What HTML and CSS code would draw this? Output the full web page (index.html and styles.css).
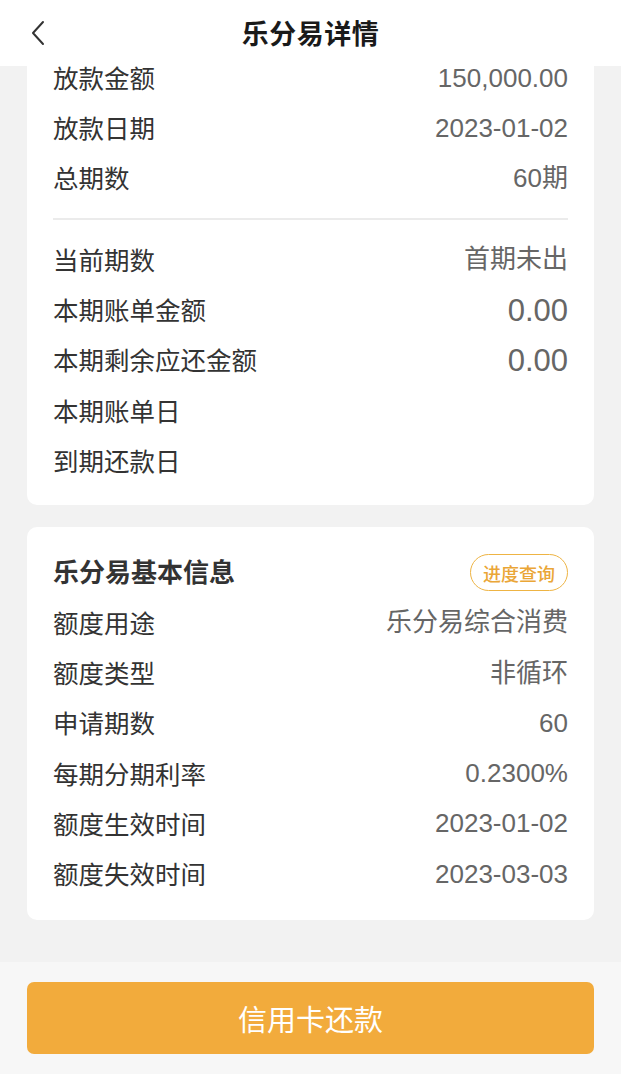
FILE: index.html
```html
<!DOCTYPE html>
<html lang="zh-CN">
<head>
<meta charset="utf-8">
<title>乐分易详情</title>
<link rel="stylesheet" href="styles.css">
</head>
<body>
<div class="page">
  <header class="nav">
    <span class="back">
      <svg width="16" height="26" viewBox="0 0 16 26"><path d="M13 2 L3 13 L13 24" fill="none" stroke="#333" stroke-width="2" stroke-linecap="round" stroke-linejoin="round"/></svg>
    </span>
    <h1 class="title">乐分易详情</h1>
  </header>
  <main class="content">
    <section class="card card-top">
      <div class="row row-first"><span class="label">放款金额</span><span class="value">150,000.00</span></div>
      <div class="row"><span class="label">放款日期</span><span class="value">2023-01-02</span></div>
      <div class="row"><span class="label">总期数</span><span class="value">60期</span></div>
      <div class="divider"></div>
      <div class="row"><span class="label">当前期数</span><span class="value">首期未出</span></div>
      <div class="row"><span class="label">本期账单金额</span><span class="value big">0.00</span></div>
      <div class="row"><span class="label">本期剩余应还金额</span><span class="value big">0.00</span></div>
      <div class="row"><span class="label">本期账单日</span><span class="value"></span></div>
      <div class="row"><span class="label">到期还款日</span><span class="value"></span></div>
    </section>
    <section class="card card-info">
      <div class="card-head">
        <h2 class="card-title">乐分易基本信息</h2>
        <span class="badge">进度查询</span>
      </div>
      <div class="row"><span class="label">额度用途</span><span class="value">乐分易综合消费</span></div>
      <div class="row"><span class="label">额度类型</span><span class="value">非循环</span></div>
      <div class="row"><span class="label">申请期数</span><span class="value">60</span></div>
      <div class="row"><span class="label">每期分期利率</span><span class="value">0.2300%</span></div>
      <div class="row"><span class="label">额度生效时间</span><span class="value">2023-01-02</span></div>
      <div class="row"><span class="label">额度失效时间</span><span class="value">2023-03-03</span></div>
    </section>
  </main>
  <footer class="footer">
    <button class="pay-btn">信用卡还款</button>
  </footer>
</div>
</body>
</html>
```

FILE: styles.css
```css
* { box-sizing: border-box; }
html, body {
  margin: 0;
  padding: 0;
  width: 621px;
  height: 1074px;
  overflow: hidden;
  background: #f2f2f2;
  font-family: "Noto Sans CJK SC", "Noto Sans", sans-serif;
}
.page {
  display: flex;
  flex-direction: column;
  height: 1074px;
}
.nav {
  height: 66px;
  flex: none;
  background: #fff;
  display: flex;
  align-items: center;
  justify-content: center;
  position: relative;
}
.back {
  position: absolute;
  left: 30px;
  top: 20px;
  width: 16px;
  height: 26px;
  display: block;
}
.back svg { display: block; }
.title {
  margin: 0;
  font-size: 27px;
  line-height: 1;
  font-weight: 700;
  color: #1a1a1a;
  letter-spacing: 0.5px;
  padding-bottom: 2px;
}
.content {
  flex: 1;
  padding: 0 27px;
  display: flex;
  flex-direction: column;
  gap: 22px;
}
.card {
  background: #fff;
  border-radius: 10px;
  padding: 0 26px;
}
.card-top {
  border-radius: 0 0 10px 10px;
  padding-bottom: 17.5px;
}
.card-info {
  padding-top: 19px;
  padding-bottom: 19px;
}
.row {
  height: 50.3px;
  display: flex;
  align-items: center;
  justify-content: space-between;
  line-height: 1;
}
.row-first {
  height: 38.5px;
  align-items: flex-start;
}
.label {
  font-size: 25.5px;
  line-height: 25px;
  color: #333;
  padding-bottom: 6px;
}
.row-first .label {
  line-height: 21px;
}
.value {
  font-family: "Liberation Sans", "Noto Sans CJK SC", sans-serif;
  font-size: 26px;
  line-height: 25px;
  color: #666;
  padding-bottom: 3px;
}
.value.big {
  font-size: 31px;
}
.divider {
  height: 2px;
  flex: none;
  background: #ebebeb;
  margin: 13px 0 16px;
}
.card-head {
  height: 53px;
  display: flex;
  align-items: center;
  justify-content: space-between;
}
.card-title {
  margin: 0;
  font-size: 26px;
  line-height: 1;
  font-weight: 700;
  color: #333;
  padding-bottom: 4px;
}
.badge {
  width: 98px;
  height: 37px;
  border: 1.5px solid #eeb444;
  border-radius: 19px;
  color: #eaa637;
  font-size: 18px;
  font-weight: 500;
  line-height: 1;
  display: flex;
  align-items: center;
  justify-content: center;
}
.footer {
  flex: none;
  height: 112px;
  background: #f7f7f7;
  padding: 20px 27px 0;
}
.pay-btn {
  width: 100%;
  height: 72px;
  border: none;
  border-radius: 7px;
  background: #f2ab3c;
  color: #fff;
  font-family: "Noto Sans CJK SC", "Noto Sans", sans-serif;
  font-size: 29px;
  line-height: 1;
  display: flex;
  align-items: center;
  justify-content: center;
}
```
